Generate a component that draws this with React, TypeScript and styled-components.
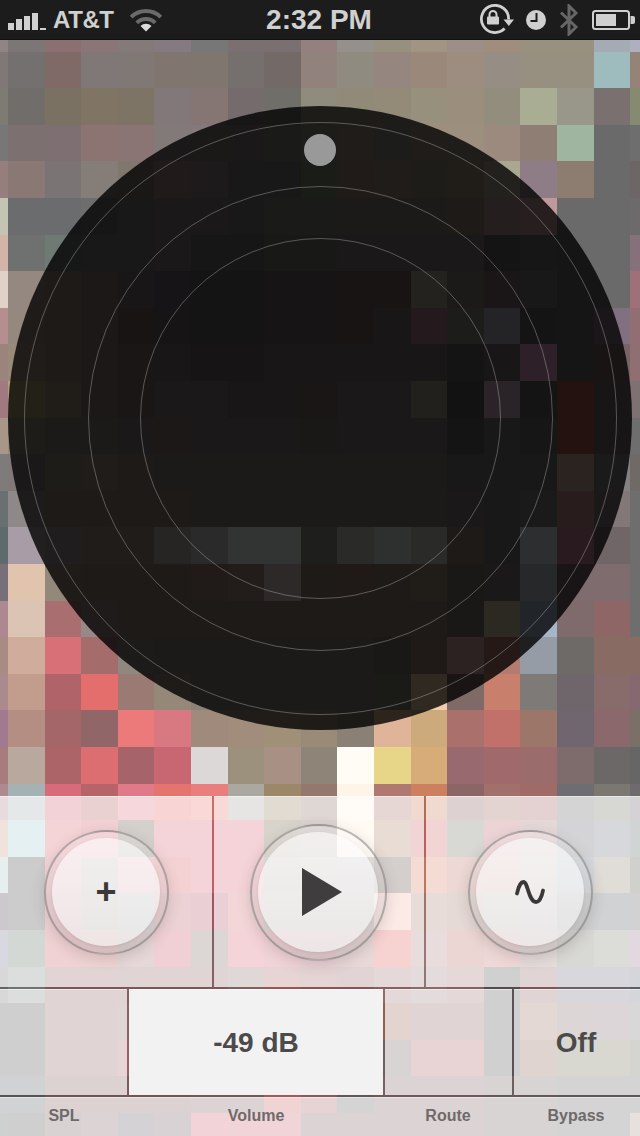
import React from "react";
import styled, { createGlobalStyle } from "styled-components";

const GlobalStyle = createGlobalStyle`
  html, body { margin: 0; padding: 0; background: #000; }
  #root { width: 640px; height: 1136px; }
`;

const CELL = 36.6;
const ORIGIN_X = -28.6;
const ORIGIN_Y = 15;

// Pixelated album art. Six digits = image colour; d + six = colour seen through the disc; p + six = colour seen through the panel.
const ART = [
  "8f8586 7d7676 8a7070 8a7677 847a7a 857a80 777777 7a7072 7a7072 94817f 95908b 97907f a29483 9e8e88 a18d7e 989180 989180 a5abb5 aeb0c0",
  "7f7877 73706f 806a68 807876 7f7875 81766f 7f766f 756f6d 736a68 91827d 8f8b80 968680 9a887a 9d8d80 968e84 979080 979080 9ebbbd 958378",
  "7e7c72 716d6a 7a7162 807464 7d7466 82787a 857674 766b6c 706e69 8f8c7d 928a78 938a78 96907c 9c8e7c 938d7e a9ad94 98978a 7a7070 868a70",
  "777778 7d7070 7e6f72 8b7472 8b7574 827a78 857a7a d1a1818 d1a1a18 d1c1c1a d201c1a d1c1c1a a08e7c 9d8f7e 9c8a7e 8e7e74 a0b5a0 6a6a6a 6e6e6e",
  "967e7c 897874 7a7574 857e78 80786e d201a1a d1c1a1a d181818 d181818 d1a1c18 d201a18 d201c1a d1e1c18 d201c18 a9a78f 8e7c86 8c7d70 6a6a6a 6e6666",
  "c4c4b4 6a6c6e 6a6c6e 6f6e6e d191818 d1a1818 d1a1818 d181818 d1a1a18 d1a1a18 d1c1a18 d1c1a18 d1c1a18 d1e1a18 d251e1e c09a9a 6a6a6a 6a6a6a 6c6a6a",
  "d2b5a6 6f7070 707a74 d191818 d191818 d1a1818 d161616 d161616 d181816 d181816 d1a1818 d1a1818 d1a1818 d1a1818 d141414 d161616 6a6a6a 6a6a6a 86707a",
  "e0d2c6 958880 8f8076 d1c1818 d181616 d161416 d141414 d141414 d161414 d161414 d181414 d181414 d24221f d1c1a18 d1a1618 d181818 6a6a6a 6a6a6a a07078",
  "b58e8f 95887e d1e1a18 d1c1818 d181414 d161414 d141414 d141414 d161414 d161414 d181414 d181616 d241a1e d1c1c1a d242426 d141414 6a6a6a 807080 906e72",
  "9a847c 9a8a7c d1e1a18 d1c1818 d1a1616 d181616 d161414 d161414 d181616 d181616 d181616 d181616 d181616 d141414 d181616 d2e2028 d151515 d181414 8f6f72",
  "a07a80 d232018 d201c18 d1c1818 d1a1616 d1a1818 d1a1818 d181616 d181616 d1a1616 d1a1818 d1a1818 d22201c d121212 d2a2428 d141414 d241210 d171515 7f7074",
  "a89788 d1e1c18 d1c1a18 d1c1a18 d1a1818 d1c1818 d1a1818 d1a1818 d1a1818 d1a1816 d1a1818 d1a1818 d1a1818 d141414 d181818 d161616 d241210 d171515 6e6e6e",
  "7e7c7a d1a1818 d1e1c18 d201c1a d1e1a18 d1c1a18 d1c1a18 d1c1a18 d1c1a18 d1c1a18 d1c1a18 d1c1a18 d1c1a18 d181818 d181818 d181818 d2a2320 d1a1a1a 706a66",
  "6a7072 8f8888 d1e1a18 d1e1a18 d1e1a18 d1e1a18 d1c1a18 d1c1a18 d1c1a18 d1c1a18 d1c1a18 d1c1a18 d1c1a18 d1a1818 d181818 d1a1a1a d281c1c d1a1818 6e6e6e",
  "5f6a6c a89ca6 d1f1d1e d201c1a d201c1a d262524 d2a2a2a d323434 d323434 d1e1e1c d2a2a28 d2e3030 d2a2a28 d1e1a18 d181818 d2c2e30 d281a1e 706668 6e6e6e",
  "787078 e0c4ae 94887a d1e1a18 d1e1a18 d1e1a18 d201a18 d221c1a d2c2928 d1e1a18 d1f1a18 d1e1a18 d201c18 d1a1816 d1a1818 d26282a 7e6c6e 7e6c6e 6e6e6e",
  "ae8890 dcc4b4 a86e70 9a8888 d1e1a18 d1e1a18 d1e1a18 d1e1a18 d1e1a18 d1e1a18 d1e1a18 d1e1a18 d1e1a18 d1a1816 d2c2822 a6b6c8 7f6a6c 8e6666 6e6e6e",
  "a88c84 d0ac9c d87078 a46c6a 8f8880 d1c1a18 d1c1a18 d1c1a18 d1c1a18 d1c1a18 d1c1a18 d1a1816 d1f1a18 d2c2222 b47c70 969ca6 6e6a68 886c64 886c64",
  "aa8a8c c29c8c b0646a e46e6c 9a7a72 968878 d1c1a18 d1c1a18 d1c1a18 d1c1a18 d1c1a18 d1a1a16 f0ccac 806a68 c8806c 7e7a78 6e666a 886c6c 866870",
  "a07a90 b48e82 a46668 906668 ec7a7a d87880 a08a7c a28c7c a09078 9a8a78 8a8076 e0b498 cdaa7c aa706c c2706a 9c7668 6f6670 8a686c 7a7068",
  "a87c7c b8a89e ac6468 dc6e72 a6646a c86672 dcd8d8 9c917c a89084 8f8478 fffcf6 e8d688 d8ac78 986a70 a06a6c 9a6c6c 7e6c6c 6c6868 666666",
  "b08890 a4b2b4 d86a7a b66468 e07a88 e6746e ea7e7c aaa8a0 9c8868 94786e fff4e8 b07870 cc8060 8c6666 a2706a a06a66 6e6e72 7a7870 6e6a6e",
  "pf0e2dc pe4f0f2 pf5d4d8 pf2d0d4 pd4d0cc pf4d4d8 pf4d4d8 pf4d4d8 pd8d4cc pdad4d0 pfffaf4 pe8dcd4 pf2d4d4 pd8d8d4 pecd4d6 pe6d8d8 pd4d4d6 pd6d8dc pd0d4d4",
  "pe6eeee pcccccc pf2d4d8 pdcd8d4 pf4d8dc pf4d2d4 pf4d4d8 pf4d4d8 pdcdad6 pe0dcd8 pe0dcdc pd4cfcd pf4dcd4 pecd8d4 peed6d4 pe6dcdc pd4d8dc pe0dcd8 pd0d0cc",
  "pccc8cc pcccccc pf0d2d6 pdcd8d4 pdcdcdc pecd2d4 pead0d4 pf2d6d8 pe0dcda pe0dcda pe0dcda pfbeae6 pe8dcd8 pe6dad6 pe4dcdc pe0dcdc pd0d2d2 pd0d2d4 pd2d2d2",
  "pd8d8e0 pd4d8d4 pf0d2d4 pf0d4d4 pe6d8d8 pf0d0d4 pdcd6d4 pf4d4d8 pf0d4d8 pecd4d8 pe8d8d8 pf6d2d0 pe8dcdc pecd6d4 peed8d8 pe6dcdc pd8d8d4 pdcdcd8 pe4d8e0",
  "pd8d8d8 pdcdede pe0d4d4 pe0d4d4 pe0d4d4 pe0d4d4 pe0d4d4 pe0d8d6 pe8d4d4 pe4d4d4 pe2d4d4 pe4d8d8 pe4dcdc pe4d8d8 pd0d0d0 pe0d4d4 pd8d8dc pd8d8dc pd4d6da",
  "pcfcfcf pcfcfcf pe0d4d4 pe0d4d4 pe0d6d6 pe0d4d4 pe0d4d4 pe0d4d4 pe0d4d4 pe0d4d4 pe0d4d4 pe4d4d0 pe0d4d4 pe0d4d4 pd0d0d0 pe4d8d4 pdcd6d6 pdcd6d8 pd8d8d8",
  "pcfcfcf pcfcfcf pe0d4d4 pe0d4d4 pe6d4d6 pe0d4d4 pe0d4d4 pe0d4d4 pe0d4d4 pe0d4d4 pe0d4d4 pd8d4d4 pe8d4d4 pe8d4d4 pd0d0d0 pe0d4d0 pd8d8d0 pd8d8d0 pd4d4d0",
  "pd0d2d4 pd0d2d4 pdcd2d2 pdcd2d2 pdcd2d2 pdcd2d2 pdcd4d4 pdcd4d4 pf0d4d4 pe6d4d4 pd4d4d4 pdcd4d4 pdcd4d4 pdcd4d4 pd8d4d4 pd8d4d4 pd4d4d4 pd4d4d4 pd4d4d4",
  "pcfd0d0 pcfcfd0 pd8d2d2 pdcd4d4 pd4d2d4 pd8d2d4 pf2d4d8 pf0d4d8 pf0d4d8 pdcd4d4 pdcd4d4 pdcd4d4 pdcd4d4 pdcd4d4 pd8d4d4 pd8d4d4 pd4d4d4 pd4d4d4 pe8e0dc",
];

const DISC_ALPHA = 0.8;
const PANEL_ALPHA = 0.7;

function rawColor(token: string): string {
  const kind = token.length === 7 ? token[0] : "";
  const hex = token.slice(token.length - 6);
  const channels = [0, 2, 4].map((i) => parseInt(hex.slice(i, i + 2), 16));
  const raw = channels.map((v) => {
    if (kind === "d") return v / (1 - DISC_ALPHA);
    if (kind === "p") return (v - 255 * PANEL_ALPHA) / (1 - PANEL_ALPHA);
    return v;
  });
  const [r, g, b] = raw.map((v) => Math.max(0, Math.min(255, Math.round(v))));
  return `rgb(${r},${g},${b})`;
}

const Screen = styled.div`
  position: relative;
  width: 640px;
  height: 1136px;
  overflow: hidden;
  display: flex;
  flex-direction: column;
  font-family: "Liberation Sans", Arial, sans-serif;
`;

const ArtLayer = styled.svg`
  position: absolute;
  inset: 0;
  width: 640px;
  height: 1136px;
`;

const StatusBar = styled.header`
  position: relative;
  flex: 0 0 40px;
  box-sizing: border-box;
  height: 40px;
  background: #1c1c1c;
  border-bottom: 1px solid #121212;
  display: grid;
  grid-template-columns: 1fr auto 1fr;
  align-items: center;
  color: #d0d0d0;
  font-weight: 700;
`;

const StatusLeft = styled.div`
  display: flex;
  align-items: center;
  padding-left: 8px;
`;

const Carrier = styled.span`
  font-size: 24px;
  letter-spacing: -0.4px;
  margin: 0 16px 0 7px;
`;

const Clock = styled.span`
  font-size: 28px;
  margin-left: -1px;
  margin-right: 1px;
`;

const StatusRight = styled.div`
  display: flex;
  align-items: center;
  justify-content: flex-end;
  gap: 12px;
  padding-right: 4px;
`;

const Stage = styled.main`
  position: relative;
  flex: 0 0 756px;
  display: flex;
  align-items: center;
  justify-content: center;
`;

const Disc = styled.div`
  position: relative;
  width: 624px;
  height: 624px;
  border-radius: 50%;
  background: rgba(0, 0, 0, ${DISC_ALPHA});
  display: flex;
  align-items: center;
  justify-content: center;
`;

const Ring = styled.div<{ $size: number }>`
  box-sizing: border-box;
  width: ${(p) => p.$size}px;
  height: ${(p) => p.$size}px;
  border-radius: 50%;
  border: 1px solid rgba(255, 255, 255, 0.28);
  display: flex;
  align-items: center;
  justify-content: center;
`;

const Knob = styled.div`
  position: absolute;
  left: 296px;
  top: 28px;
  width: 32px;
  height: 32px;
  border-radius: 50%;
  background: #999;
`;

const Panel = styled.section`
  position: relative;
  flex: 0 0 340px;
  display: flex;
  flex-direction: column;
`;

const RowGap = styled.div`
  flex: 0 0 2px;
  background: rgba(30, 0, 0, 0.22);
`;

const ColGap = styled.div`
  flex: 0 0 2px;
  background: rgba(30, 0, 0, 0.14);
`;

const TransportRow = styled.div`
  flex: 0 0 191px;
  display: flex;
`;

const MeterRow = styled.div`
  flex: 0 0 106px;
  display: flex;
`;

const TabRow = styled.div`
  flex: 1;
  display: flex;
  border-top: 1px solid rgba(255, 255, 255, 0.45);
  background: rgba(255, 255, 255, ${PANEL_ALPHA});
  color: #6e6a6a;
  font-size: 16px;
  font-weight: 700;
`;

const Tab = styled.div<{ $w: number }>`
  flex: 0 0 ${(p) => p.$w}px;
  display: flex;
  justify-content: center;
  padding-top: 9px;
  line-height: 18px;
`;

const TransportCell = styled.div<{ $w: number; $inset?: number }>`
  flex: 0 0 ${(p) => p.$w}px;
  box-sizing: border-box;
  padding-right: ${(p) => p.$inset ?? 0}px;
  display: flex;
  align-items: center;
  justify-content: center;
  background: rgba(255, 255, 255, ${PANEL_ALPHA});
  border-top: 1px solid rgba(255, 255, 255, 0.45);
`;

const MeterCell = styled.div<{ $w: number; $active?: boolean; $inset?: number }>`
  flex: 0 0 ${(p) => p.$w}px;
  box-sizing: border-box;
  padding-right: ${(p) => p.$inset ?? 0}px;
  display: flex;
  align-items: center;
  justify-content: center;
  background: ${(p) => (p.$active ? "#f2f2f2" : `rgba(255, 255, 255, ${PANEL_ALPHA})`)};
  border-top: 1px solid rgba(255, 255, 255, 0.45);
  color: #4c4a4a;
  font-size: 28px;
  font-weight: 700;
`;

const RoundRing = styled.div<{ $size: number }>`
  box-sizing: border-box;
  width: ${(p) => p.$size}px;
  height: ${(p) => p.$size}px;
  border-radius: 50%;
  border: 2px solid rgba(115, 115, 115, 0.5);
  background: linear-gradient(rgba(255, 255, 255, 0.12), rgba(110, 95, 95, 0.2));
  box-shadow: 0 4px 14px rgba(70, 50, 50, 0.18);
  display: flex;
  align-items: center;
  justify-content: center;
`;

const RoundFace = styled.button<{ $size: number }>`
  width: ${(p) => p.$size}px;
  height: ${(p) => p.$size}px;
  padding: 0;
  border: 0;
  border-radius: 50%;
  background: rgba(255, 255, 255, 0.6);
  box-shadow: 0 1px 3px rgba(70, 50, 50, 0.1);
  display: flex;
  align-items: center;
  justify-content: center;
  color: #3a3838;
  font-family: "Liberation Sans", Arial, sans-serif;
`;

const PlusGlyph = styled.span`
  font-size: 36px;
  font-weight: 700;
  line-height: 36px;
`;

const Bars = () => (
  <svg width="38" height="18" viewBox="0 0 38 18" fill="#d0d0d0" style={{ marginTop: 2 }}>
    <rect x="0" y="11" width="6" height="7" />
    <rect x="8" y="7" width="6" height="11" />
    <rect x="16" y="4" width="6" height="14" />
    <rect x="24" y="1" width="6" height="17" />
    <rect x="32" y="16" width="6" height="2" />
  </svg>
);

const Wifi = () => (
  <svg width="32" height="24" viewBox="0 0 32 24" fill="none">
    <path d="M1.2 9.2A21 21 0 0 1 30.8 9.2" stroke="#6a6a6a" strokeWidth="4" />
    <path d="M6.8 14.8A13 13 0 0 1 25.2 14.8" stroke="#6a6a6a" strokeWidth="4" />
    <path d="M16 23.5L10.5 18A7.8 7.8 0 0 1 21.5 18Z" fill="#dcdcdc" />
  </svg>
);

const RotationLock = () => (
  <svg width="36" height="32" viewBox="0 0 36 32" fill="none">
    <path d="M26.6 24.6A13.6 13.6 0 1 1 30.6 15.5" stroke="#d0d0d0" strokeWidth="2.8" />
    <path d="M25.5 15.5H36L30.8 22Z" fill="#d0d0d0" />
    <rect x="9" y="12.5" width="12" height="8" rx="1" fill="#d0d0d0" />
    <path d="M11.5 13V10.5A3.5 3.5 0 0 1 18.5 10.5V13" stroke="#d0d0d0" strokeWidth="2" />
  </svg>
);

const AlarmClock = () => (
  <svg width="20" height="20" viewBox="0 0 20 20">
    <circle cx="10" cy="10" r="10" fill="#cfcfcf" />
    <path d="M10.5 3V11H4.5" fill="none" stroke="#1c1c1c" strokeWidth="2" />
  </svg>
);

const Bluetooth = () => (
  <svg width="22" height="32" viewBox="-2 0 22 32" fill="none">
    <path d="M1 8.5L16 23L9 30V2L16 9L1 23.5" stroke="#666" strokeWidth="3" />
  </svg>
);

const Battery = () => (
  <svg width="44" height="20" viewBox="0 0 44 20">
    <rect x="1" y="1" width="36" height="18" rx="2.5" fill="none" stroke="#cfcfcf" strokeWidth="2" />
    <rect x="4" y="4" width="20" height="12" fill="#cfcfcf" />
    <path d="M38.5 6H41A2 2 0 0 1 43 8V12A2 2 0 0 1 41 14H38.5Z" fill="#cfcfcf" />
  </svg>
);

const PlayIcon = () => (
  <svg width="40" height="48" viewBox="0 0 40 48" style={{ marginLeft: 8 }}>
    <path d="M0 0L40 24L0 48Z" fill="#3f3d3d" />
  </svg>
);

const WaveIcon = () => (
  <svg width="30" height="24" viewBox="0 0 30 24" fill="none">
    <path d="M2 13.5C3.5 6 6 2 8.5 2C13 2 13.5 22 21 22C24.5 22 27 16 28 10.5" stroke="#3a3838" strokeWidth="3.8" strokeLinecap="round" />
  </svg>
);

export default function App() {
  return (
    <Screen>
      <GlobalStyle />
      <ArtLayer viewBox="0 0 640 1136" shapeRendering="crispEdges">
        {ART.map((row, r) =>
          row.split(" ").map((token, c) => (
            <rect
              key={`${r}-${c}`}
              x={ORIGIN_X + c * CELL}
              y={ORIGIN_Y + r * CELL}
              width={CELL + 0.5}
              height={CELL + 0.5}
              fill={rawColor(token)}
            />
          ))
        )}
      </ArtLayer>
      <StatusBar>
        <StatusLeft>
          <Bars />
          <Carrier>AT&amp;T</Carrier>
          <Wifi />
        </StatusLeft>
        <Clock>2:32 PM</Clock>
        <StatusRight>
          <RotationLock />
          <AlarmClock />
          <Bluetooth />
          <Battery />
        </StatusRight>
      </StatusBar>
      <Stage>
        <Disc>
          <Ring $size={593}>
            <Ring $size={465}>
              <Ring $size={361} />
            </Ring>
          </Ring>
          <Knob />
        </Disc>
      </Stage>
      <Panel>
        <TransportRow>
          <TransportCell $w={212}>
            <RoundRing $size={125}>
              <RoundFace $size={108}>
                <PlusGlyph>+</PlusGlyph>
              </RoundFace>
            </RoundRing>
          </TransportCell>
          <ColGap />
          <TransportCell $w={210} $inset={2}>
            <RoundRing $size={137}>
              <RoundFace $size={120}>
                <PlayIcon />
              </RoundFace>
            </RoundRing>
          </TransportCell>
          <ColGap />
          <TransportCell $w={214} $inset={6}>
            <RoundRing $size={125}>
              <RoundFace $size={108}>
                <WaveIcon />
              </RoundFace>
            </RoundRing>
          </TransportCell>
        </TransportRow>
        <RowGap />
        <MeterRow>
          <MeterCell $w={127} />
          <ColGap />
          <MeterCell $w={254} $active>-49 dB</MeterCell>
          <ColGap />
          <MeterCell $w={127} />
          <ColGap />
          <MeterCell $w={126} $inset={2}>Off</MeterCell>
        </MeterRow>
        <RowGap />
        <TabRow>
          <Tab $w={128}>SPL</Tab>
          <Tab $w={256}>Volume</Tab>
          <Tab $w={128}>Route</Tab>
          <Tab $w={128}>Bypass</Tab>
        </TabRow>
      </Panel>
    </Screen>
  );
}
